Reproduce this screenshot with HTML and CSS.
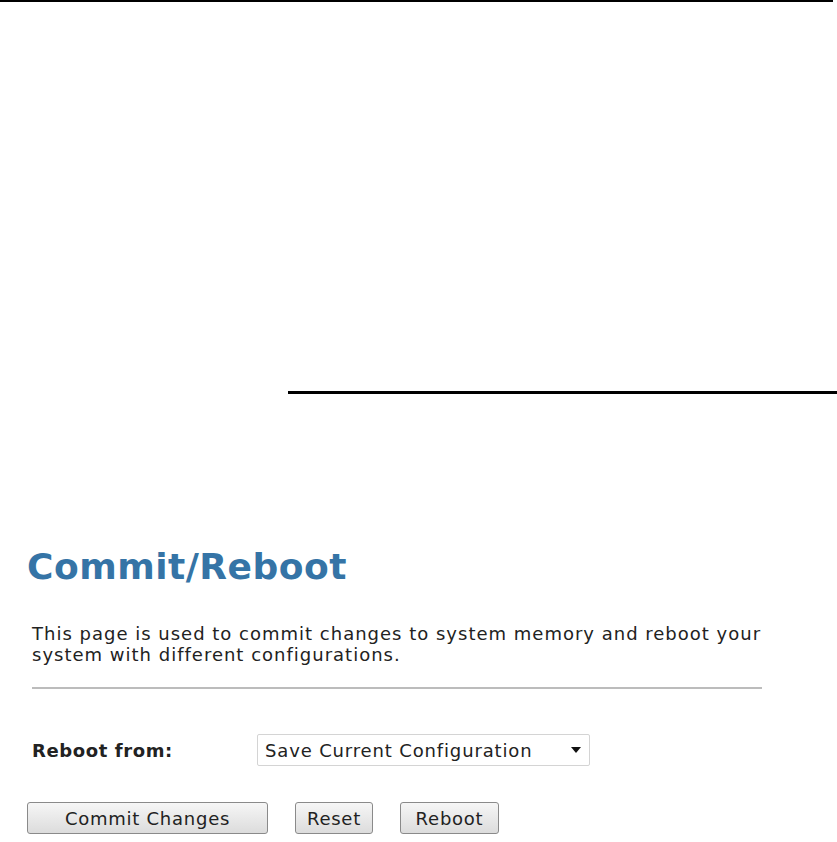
FILE: index.html
```html
<!DOCTYPE html>
<html>
<head>
<meta charset="utf-8">
<title>Commit/Reboot</title>
<link rel="stylesheet" href="styles.css">
</head>
<body>
<div class="top-rule"></div>
<div class="banner"></div>
<div class="banner-rule"></div>
<main class="content">
  <h1 class="title">Commit/Reboot</h1>
  <p class="intro">This page is used to commit changes to system memory and reboot your system with different configurations.</p>
  <div class="divider"></div>
  <div class="field-row">
    <label class="field-label">Reboot from:</label>
    <div class="select">
      <span class="select-text">Save Current Configuration</span>
      <span class="select-arrow"></span>
    </div>
  </div>
  <div class="actions">
    <button class="btn btn-wide">Commit Changes</button>
    <button class="btn btn-reset">Reset</button>
    <button class="btn btn-reboot">Reboot</button>
  </div>
</main>
</body>
</html>
```
FILE: styles.css
```css
html, body {
  margin: 0;
  padding: 0;
  background: #fff;
}
body {
  font-family: "DejaVu Sans", Verdana, sans-serif;
  color: #222;
  width: 837px;
  overflow: hidden;
}
.top-rule {
  width: 833px;
  height: 2px;
  background: #000;
}
.banner {
  height: 389px;
}
.banner-rule {
  margin-left: 288px;
  height: 3px;
  background: #000;
}
.content {
  padding: 0 0 0 27px;
}
.title {
  margin: 151px 0 0 0;
  font-size: 36px;
  line-height: 44px;
  font-weight: bold;
  color: #3574a6;
  letter-spacing: 0.5px;
}
.intro {
  margin: 34px 0 0 5px;
  width: 745px;
  font-size: 18px;
  line-height: 21px;
  letter-spacing: 1px;
  color: #222;
}
.divider {
  margin: 22px 0 0 5px;
  width: 730px;
  height: 2px;
  background: #bcbcbc;
}
.field-row {
  display: flex;
  align-items: center;
  margin: 45px 0 0 5px;
}
.field-label {
  width: 225px;
  font-size: 18px;
  letter-spacing: 0.6px;
  font-weight: bold;
  color: #222;
}
.select {
  box-sizing: border-box;
  width: 333px;
  height: 32px;
  border: 1px solid #d4d4d4;
  border-radius: 2px;
  display: flex;
  align-items: center;
  justify-content: space-between;
  padding: 0 8px 0 7px;
  background: #fff;
}
.select-text {
  font-size: 18px;
  letter-spacing: 0.85px;
  color: #222;
}
.select-arrow {
  width: 0;
  height: 0;
  border-left: 5px solid transparent;
  border-right: 5px solid transparent;
  border-top: 6px solid #111;
}
.actions {
  display: flex;
  gap: 27px;
  margin-top: 36px;
}
.btn {
  box-sizing: border-box;
  height: 32px;
  border: 1px solid #8a8a8a;
  border-radius: 3px;
  background: linear-gradient(#f6f6f6, #dcdcdc);
  font-family: "DejaVu Sans", Verdana, sans-serif;
  font-size: 18px;
  letter-spacing: 0.75px;
  color: #222;
  padding: 0;
}
.btn-wide { width: 241px; }
.btn-reset { width: 78px; }
.btn-reboot { width: 99px; }
```
